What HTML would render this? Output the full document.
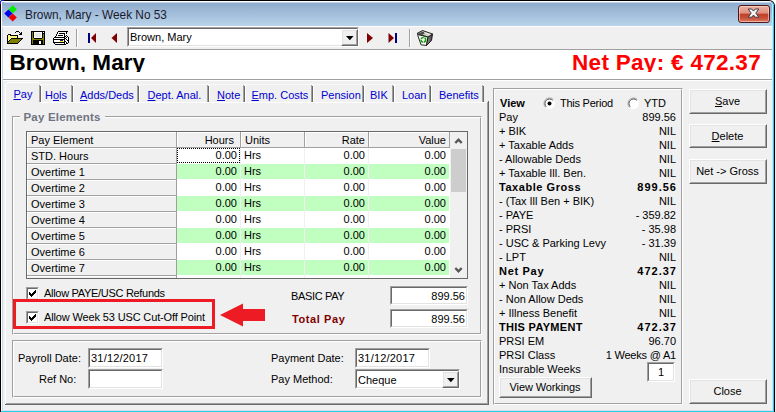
<!DOCTYPE html>
<html><head><meta charset="utf-8">
<style>
*{margin:0;padding:0;box-sizing:border-box}
html,body{width:776px;height:412px;overflow:hidden;background:#fff}
body{position:relative;font-family:"Liberation Sans",sans-serif;font-size:11px;color:#000}
.a{position:absolute}
.t{position:absolute;white-space:nowrap;font-size:11px;line-height:13px}
.b{font-weight:bold}
.r{text-align:right}
.c{text-align:center}
.blue{color:#0000d0}
.u{text-decoration:underline}
/* sunken edit */
.ed{position:absolute;background:#fff;border-top:1px solid #a0a0a0;border-left:1px solid #a0a0a0;border-right:1px solid #fff;border-bottom:1px solid #fff}
.ed:before{content:"";position:absolute;left:0;top:0;right:0;bottom:0;border-top:1px solid #696969;border-left:1px solid #696969;border-right:1px solid #e3e3e3;border-bottom:1px solid #e3e3e3}
/* raised button */
.btn{position:absolute;background:#f0f0f0;border-top:1px solid #fff;border-left:1px solid #fff;border-right:1px solid #696969;border-bottom:1px solid #696969}
.btn:before{content:"";position:absolute;left:0;top:0;right:0;bottom:0;border-top:1px solid #e3e3e3;border-left:1px solid #e3e3e3;border-right:1px solid #a0a0a0;border-bottom:1px solid #a0a0a0}
/* group box */
.grp{position:absolute;border-top:1px solid #a0a0a0;border-left:1px solid #a0a0a0;border-right:1px solid #fff;border-bottom:1px solid #fff}
.grp:before{content:"";position:absolute;left:0;top:0;right:0;bottom:0;border-top:1px solid #fff;border-left:1px solid #fff;border-right:1px solid #a0a0a0;border-bottom:1px solid #a0a0a0}
</style></head>
<body>
<!-- window frame -->
<div class="a" style="left:775px;top:4px;width:1px;height:408px;background:#e0e8fc"></div>
<div class="a" style="left:0;top:0;width:775px;height:412px;background:#000;border-radius:2px 6px 0 0"></div>
<div class="a" style="left:1px;top:1px;width:773px;height:411px;background:#fff;border-radius:1px 5px 0 0"></div>
<div class="a" style="left:1px;top:2px;width:773px;height:410px;background:#22d0ea;border-radius:1px 4px 0 0"></div>
<div class="a" style="left:1px;top:2px;width:1px;height:409px;background:#fff"></div>
<div class="a" style="left:2px;top:2px;width:771px;height:409px;background:#dcdcf0;border-radius:1px 4px 0 0"></div>
<div class="a" style="left:2px;top:2px;width:1px;height:408px;background:#c4d8ee"></div>
<div class="a" style="left:0;top:0;width:1px;height:1px;background:#7fe8ff"></div>
<div class="a" style="left:2px;top:0;width:2px;height:1px;background:#3010e0"></div>
<div class="a" style="left:0;top:1px;width:1px;height:3px;background:#3010e8"></div>
<!-- title bar gradient -->
<div class="a" style="left:2px;top:2px;width:770px;height:24px;background:linear-gradient(#8eaacb,#b9d3ea);border-radius:1px 4px 0 0"></div>
<div class="a" style="left:2px;top:26px;width:770px;height:1px;background:#fff"></div>
<div class="a" style="left:4px;top:2px;width:766px;height:1px;background:#c0d4ea"></div>
<!-- client area -->
<div class="a" style="left:3px;top:27px;width:769px;height:383px;background:#f0f0f0"></div>

<!-- app icon -->
<svg class="a" style="left:0;top:0" width="24" height="24" viewBox="0 0 24 24">
<polygon points="12.7,5.2 16.8,9.3 12.7,13.4 8.6,9.3" fill="#00f000"/>
<polygon points="8.4,9.4 12.5,13.5 8.4,17.6 4.3,13.5" fill="#0000f0"/>
<polygon points="12.7,13.4 16.8,17.5 12.7,21.6 8.6,17.5" fill="#f00000"/>
</svg>
<div class="t" style="left:25px;top:7px;font-size:11.85px;line-height:16px;color:#1a1a2e">Brown, Mary - Week No 53</div>
<!-- close button -->
<div class="a" style="left:738px;top:5px;width:32px;height:18px;border:1px solid #4a1818;border-radius:3px;background:linear-gradient(#eab0a0 0%,#e09080 45%,#c04028 50%,#c85038 75%,#dc7a64 100%);box-shadow:inset 0 0 0 1px rgba(255,220,210,.6)"></div>
<svg class="a" style="left:745px;top:7px" width="17" height="13" viewBox="0 0 17 13">
<polygon points="3.20,2.00 6.60,2.00 8.50,4.10 10.40,2.00 13.80,2.00 10.80,6.10 13.80,10.20 10.40,10.20 8.50,8.10 6.60,10.20 3.20,10.20 6.20,6.10" fill="#f8f8f8" stroke="#3a3a4c" stroke-width="1" stroke-linejoin="round"/>
</svg>

<!-- toolbar -->
<div class="a" style="left:3px;top:49px;width:769px;height:1px;background:#a0a0a0"></div>
<!-- open folder icon -->
<svg class="a" style="left:0;top:0" width="80" height="50" viewBox="0 0 80 50" shape-rendering="crispEdges"><rect x="16" y="31" width="3" height="1" fill="#000"/><rect x="15" y="32" width="1" height="1" fill="#000"/><rect x="19" y="32" width="1" height="1" fill="#000"/><rect x="21" y="32" width="1" height="1" fill="#000"/><rect x="20" y="33" width="2" height="1" fill="#000"/><rect x="8" y="34" width="3" height="1" fill="#000"/><rect x="19" y="34" width="3" height="1" fill="#000"/><rect x="7" y="35" width="1" height="1" fill="#000"/><rect x="8" y="35" width="1" height="1" fill="#ffff00"/><rect x="9" y="35" width="1" height="1" fill="#fff"/><rect x="10" y="35" width="8" height="1" fill="#000"/><rect x="7" y="36" width="1" height="1" fill="#000"/><rect x="8" y="36" width="1" height="1" fill="#fff"/><rect x="9" y="36" width="1" height="1" fill="#ffff00"/><rect x="10" y="36" width="1" height="1" fill="#fff"/><rect x="11" y="36" width="1" height="1" fill="#ffff00"/><rect x="12" y="36" width="1" height="1" fill="#fff"/><rect x="13" y="36" width="1" height="1" fill="#ffff00"/><rect x="14" y="36" width="1" height="1" fill="#fff"/><rect x="15" y="36" width="1" height="1" fill="#ffff00"/><rect x="16" y="36" width="1" height="1" fill="#fff"/><rect x="17" y="36" width="1" height="1" fill="#000"/><rect x="7" y="37" width="1" height="1" fill="#000"/><rect x="8" y="37" width="1" height="1" fill="#ffff00"/><rect x="9" y="37" width="1" height="1" fill="#fff"/><rect x="10" y="37" width="1" height="1" fill="#ffff00"/><rect x="11" y="37" width="1" height="1" fill="#fff"/><rect x="12" y="37" width="1" height="1" fill="#ffff00"/><rect x="13" y="37" width="1" height="1" fill="#fff"/><rect x="14" y="37" width="1" height="1" fill="#ffff00"/><rect x="15" y="37" width="1" height="1" fill="#fff"/><rect x="16" y="37" width="1" height="1" fill="#ffff00"/><rect x="17" y="37" width="1" height="1" fill="#000"/><rect x="7" y="38" width="1" height="1" fill="#000"/><rect x="8" y="38" width="1" height="1" fill="#fff"/><rect x="9" y="38" width="1" height="1" fill="#ffff00"/><rect x="10" y="38" width="1" height="1" fill="#fff"/><rect x="11" y="38" width="12" height="1" fill="#000"/><rect x="7" y="39" width="1" height="1" fill="#000"/><rect x="8" y="39" width="1" height="1" fill="#ffff00"/><rect x="9" y="39" width="1" height="1" fill="#fff"/><rect x="10" y="39" width="1" height="1" fill="#000"/><rect x="11" y="39" width="10" height="1" fill="#808000"/><rect x="21" y="39" width="1" height="1" fill="#000"/><rect x="7" y="40" width="1" height="1" fill="#000"/><rect x="8" y="40" width="1" height="1" fill="#fff"/><rect x="9" y="40" width="1" height="1" fill="#000"/><rect x="10" y="40" width="10" height="1" fill="#808000"/><rect x="20" y="40" width="1" height="1" fill="#000"/><rect x="7" y="41" width="2" height="1" fill="#000"/><rect x="9" y="41" width="10" height="1" fill="#808000"/><rect x="19" y="41" width="1" height="1" fill="#000"/><rect x="7" y="42" width="1" height="1" fill="#000"/><rect x="8" y="42" width="10" height="1" fill="#808000"/><rect x="18" y="42" width="1" height="1" fill="#000"/><rect x="7" y="43" width="11" height="1" fill="#000"/><rect x="31" y="31" width="14" height="1" fill="#000"/><rect x="31" y="32" width="1" height="1" fill="#000"/><rect x="32" y="32" width="1" height="1" fill="#808000"/><rect x="33" y="32" width="1" height="1" fill="#000"/><rect x="34" y="32" width="8" height="1" fill="#fff"/><rect x="42" y="32" width="1" height="1" fill="#000"/><rect x="43" y="32" width="1" height="1" fill="#fff"/><rect x="44" y="32" width="1" height="1" fill="#000"/><rect x="31" y="33" width="1" height="1" fill="#000"/><rect x="32" y="33" width="1" height="1" fill="#808000"/><rect x="33" y="33" width="1" height="1" fill="#000"/><rect x="34" y="33" width="1" height="1" fill="#fff"/><rect x="35" y="33" width="6" height="1" fill="#e6e6e6"/><rect x="41" y="33" width="1" height="1" fill="#fff"/><rect x="42" y="33" width="3" height="1" fill="#000"/><rect x="31" y="34" width="1" height="1" fill="#000"/><rect x="32" y="34" width="1" height="1" fill="#808000"/><rect x="33" y="34" width="1" height="1" fill="#000"/><rect x="34" y="34" width="1" height="1" fill="#fff"/><rect x="35" y="34" width="6" height="1" fill="#e6e6e6"/><rect x="41" y="34" width="1" height="1" fill="#fff"/><rect x="42" y="34" width="1" height="1" fill="#000"/><rect x="43" y="34" width="1" height="1" fill="#808000"/><rect x="44" y="34" width="1" height="1" fill="#000"/><rect x="31" y="35" width="1" height="1" fill="#000"/><rect x="32" y="35" width="1" height="1" fill="#808000"/><rect x="33" y="35" width="1" height="1" fill="#000"/><rect x="34" y="35" width="1" height="1" fill="#fff"/><rect x="35" y="35" width="6" height="1" fill="#e6e6e6"/><rect x="41" y="35" width="1" height="1" fill="#fff"/><rect x="42" y="35" width="1" height="1" fill="#000"/><rect x="43" y="35" width="1" height="1" fill="#808000"/><rect x="44" y="35" width="1" height="1" fill="#000"/><rect x="31" y="36" width="1" height="1" fill="#000"/><rect x="32" y="36" width="1" height="1" fill="#808000"/><rect x="33" y="36" width="1" height="1" fill="#000"/><rect x="34" y="36" width="1" height="1" fill="#fff"/><rect x="35" y="36" width="6" height="1" fill="#e6e6e6"/><rect x="41" y="36" width="1" height="1" fill="#fff"/><rect x="42" y="36" width="1" height="1" fill="#000"/><rect x="43" y="36" width="1" height="1" fill="#808000"/><rect x="44" y="36" width="1" height="1" fill="#000"/><rect x="31" y="37" width="1" height="1" fill="#000"/><rect x="32" y="37" width="1" height="1" fill="#808000"/><rect x="33" y="37" width="1" height="1" fill="#000"/><rect x="34" y="37" width="8" height="1" fill="#fff"/><rect x="42" y="37" width="1" height="1" fill="#000"/><rect x="43" y="37" width="1" height="1" fill="#808000"/><rect x="44" y="37" width="1" height="1" fill="#000"/><rect x="31" y="38" width="1" height="1" fill="#000"/><rect x="32" y="38" width="2" height="1" fill="#808000"/><rect x="34" y="38" width="8" height="1" fill="#000"/><rect x="42" y="38" width="2" height="1" fill="#808000"/><rect x="44" y="38" width="1" height="1" fill="#000"/><rect x="31" y="39" width="1" height="1" fill="#000"/><rect x="32" y="39" width="12" height="1" fill="#808000"/><rect x="44" y="39" width="1" height="1" fill="#000"/><rect x="31" y="40" width="1" height="1" fill="#000"/><rect x="32" y="40" width="1" height="1" fill="#808000"/><rect x="33" y="40" width="10" height="1" fill="#000"/><rect x="43" y="40" width="1" height="1" fill="#808000"/><rect x="44" y="40" width="1" height="1" fill="#000"/><rect x="31" y="41" width="1" height="1" fill="#000"/><rect x="32" y="41" width="1" height="1" fill="#808000"/><rect x="33" y="41" width="6" height="1" fill="#000"/><rect x="39" y="41" width="2" height="1" fill="#fff"/><rect x="41" y="41" width="2" height="1" fill="#000"/><rect x="43" y="41" width="1" height="1" fill="#808000"/><rect x="44" y="41" width="1" height="1" fill="#000"/><rect x="31" y="42" width="1" height="1" fill="#000"/><rect x="32" y="42" width="1" height="1" fill="#808000"/><rect x="33" y="42" width="6" height="1" fill="#000"/><rect x="39" y="42" width="2" height="1" fill="#fff"/><rect x="41" y="42" width="2" height="1" fill="#000"/><rect x="43" y="42" width="1" height="1" fill="#808000"/><rect x="44" y="42" width="1" height="1" fill="#000"/><rect x="31" y="43" width="1" height="1" fill="#000"/><rect x="32" y="43" width="1" height="1" fill="#808000"/><rect x="33" y="43" width="6" height="1" fill="#000"/><rect x="39" y="43" width="2" height="1" fill="#fff"/><rect x="41" y="43" width="2" height="1" fill="#000"/><rect x="43" y="43" width="1" height="1" fill="#808000"/><rect x="44" y="43" width="1" height="1" fill="#000"/><rect x="31" y="44" width="14" height="1" fill="#000"/><rect x="58" y="31" width="10" height="1" fill="#000"/><rect x="57" y="32" width="1" height="1" fill="#000"/><rect x="58" y="32" width="8" height="1" fill="#fff"/><rect x="66" y="32" width="1" height="1" fill="#000"/><rect x="57" y="33" width="1" height="1" fill="#000"/><rect x="58" y="33" width="1" height="1" fill="#fff"/><rect x="59" y="33" width="6" height="1" fill="#000"/><rect x="65" y="33" width="1" height="1" fill="#fff"/><rect x="66" y="33" width="1" height="1" fill="#000"/><rect x="56" y="34" width="1" height="1" fill="#000"/><rect x="57" y="34" width="7" height="1" fill="#fff"/><rect x="64" y="34" width="1" height="1" fill="#000"/><rect x="65" y="34" width="2" height="1" fill="#fff"/><rect x="56" y="35" width="1" height="1" fill="#000"/><rect x="57" y="35" width="1" height="1" fill="#fff"/><rect x="58" y="35" width="5" height="1" fill="#000"/><rect x="63" y="35" width="1" height="1" fill="#fff"/><rect x="64" y="35" width="1" height="1" fill="#000"/><rect x="65" y="35" width="1" height="1" fill="#fff"/><rect x="66" y="35" width="1" height="1" fill="#000"/><rect x="67" y="35" width="1" height="1" fill="#fff"/><rect x="55" y="36" width="1" height="1" fill="#000"/><rect x="56" y="36" width="8" height="1" fill="#fff"/><rect x="64" y="36" width="2" height="1" fill="#000"/><rect x="66" y="36" width="1" height="1" fill="#fff"/><rect x="67" y="36" width="1" height="1" fill="#000"/><rect x="54" y="37" width="11" height="1" fill="#000"/><rect x="65" y="37" width="1" height="1" fill="#fff"/><rect x="66" y="37" width="1" height="1" fill="#000"/><rect x="67" y="37" width="1" height="1" fill="#fff"/><rect x="68" y="37" width="1" height="1" fill="#000"/><rect x="53" y="38" width="1" height="1" fill="#000"/><rect x="54" y="38" width="10" height="1" fill="#fff"/><rect x="64" y="38" width="2" height="1" fill="#000"/><rect x="66" y="38" width="2" height="1" fill="#fff"/><rect x="68" y="38" width="1" height="1" fill="#000"/><rect x="53" y="39" width="12" height="1" fill="#000"/><rect x="65" y="39" width="1" height="1" fill="#fff"/><rect x="66" y="39" width="1" height="1" fill="#000"/><rect x="67" y="39" width="1" height="1" fill="#fff"/><rect x="68" y="39" width="1" height="1" fill="#000"/><rect x="53" y="40" width="1" height="1" fill="#000"/><rect x="54" y="40" width="6" height="1" fill="#fff"/><rect x="60" y="40" width="3" height="1" fill="#202050"/><rect x="63" y="40" width="1" height="1" fill="#fff"/><rect x="64" y="40" width="1" height="1" fill="#000"/><rect x="65" y="40" width="2" height="1" fill="#fff"/><rect x="67" y="40" width="2" height="1" fill="#000"/><rect x="53" y="41" width="1" height="1" fill="#000"/><rect x="54" y="41" width="6" height="1" fill="#fff"/><rect x="60" y="41" width="3" height="1" fill="#ffff00"/><rect x="63" y="41" width="1" height="1" fill="#fff"/><rect x="64" y="41" width="2" height="1" fill="#000"/><rect x="66" y="41" width="2" height="1" fill="#fff"/><rect x="68" y="41" width="1" height="1" fill="#000"/><rect x="53" y="42" width="12" height="1" fill="#000"/><rect x="65" y="42" width="1" height="1" fill="#fff"/><rect x="66" y="42" width="1" height="1" fill="#000"/><rect x="67" y="42" width="1" height="1" fill="#fff"/><rect x="68" y="42" width="1" height="1" fill="#000"/><rect x="54" y="43" width="1" height="1" fill="#000"/><rect x="55" y="43" width="9" height="1" fill="#fff"/><rect x="64" y="43" width="1" height="1" fill="#000"/><rect x="65" y="43" width="1" height="1" fill="#fff"/><rect x="66" y="43" width="2" height="1" fill="#000"/><rect x="55" y="44" width="11" height="1" fill="#000"/></svg>
<div class="a" style="left:76px;top:29px;width:1px;height:18px;background:#a0a0a0"></div>
<div class="a" style="left:77px;top:29px;width:1px;height:18px;background:#fff"></div>
<!-- first / prev -->
<svg class="a" style="left:80px;top:30px" width="45" height="16" viewBox="0 0 45 16" shape-rendering="crispEdges">
<rect x="8" y="3" width="2" height="10" fill="#000080"/>
<polygon points="11,8 16,3 16,13" fill="#800000" shape-rendering="auto"/>
<polygon points="31.5,8 37,3 37,13" fill="#800000" shape-rendering="auto"/>
</svg>
<!-- employee combo -->
<div class="ed" style="left:127px;top:27px;width:232px;height:20px"></div>
<div class="t" style="left:130px;top:31px">Brown, Mary</div>
<div class="btn" style="left:341px;top:29px;width:17px;height:17px"></div>
<svg class="a" style="left:346px;top:36px" width="8" height="5" viewBox="0 0 8 5"><polygon points="0,0 7.6,0 3.8,4.2" fill="#000"/></svg>
<!-- next / last -->
<svg class="a" style="left:360px;top:30px" width="45" height="16" viewBox="0 0 45 16">
<polygon points="7,3 7,13 13,8" fill="#800000"/>
<polygon points="28.5,3 28.5,13 34,8" fill="#800000"/>
<rect x="35" y="3" width="2" height="10" fill="#000080"/>
</svg>
<div class="a" style="left:409px;top:29px;width:1px;height:18px;background:#a0a0a0"></div>
<div class="a" style="left:410px;top:29px;width:1px;height:18px;background:#fff"></div>
<!-- recycle bin -->
<svg class="a" style="left:414px;top:28px" width="22" height="20" viewBox="0 0 22 20">
<defs><linearGradient id="rf" x1="0" x2="1"><stop offset="0" stop-color="#9a9a9a"/><stop offset="1" stop-color="#3a3a3a"/></linearGradient></defs>
<polygon points="3.5,6.5 14,9 12.5,17.5 7,16.8" fill="#f6f6ee" stroke="#2a2a2a" stroke-width="1"/>
<polygon points="14,9 18.5,6 17.5,12.5 12.5,17.5" fill="url(#rf)" stroke="#1a1a1a" stroke-width="1"/>
<polygon points="3,5.5 8.5,2.5 18.5,6 14,9" fill="#d0d0c8" stroke="#222" stroke-width="1"/>
<polygon points="4.5,5.5 8.5,3.5 12,4.8 8,7" fill="#505050"/>
<path d="M10,4.5 L16,6.5" stroke="#f0f0e0" stroke-width="1"/>
<circle cx="9.3" cy="11.8" r="2.4" fill="none" stroke="#10a010" stroke-width="1.5" stroke-dasharray="3 0.8"/>
</svg>
<!-- header panel -->
<div class="a" style="left:3px;top:50px;width:769px;height:29px;background:#fff"></div>
<div class="a" style="left:3px;top:79px;width:769px;height:1px;background:#a0a0a0"></div>
<div class="a" style="left:3px;top:80px;width:769px;height:1px;background:#fff"></div>
<div class="a" style="left:3px;top:50px;width:769px;height:22px;overflow:hidden">
 <div class="t b" style="left:6.5px;top:0px;font-size:22.5px;line-height:26px;letter-spacing:0.05px">Brown, Mary</div>
 <div class="t b" style="right:11px;top:0px;font-size:22.5px;line-height:26px;color:#ff0000;letter-spacing:0.3px">Net Pay: &#8364; 472.37</div>
</div>

<!-- tabs -->
<div class="a" style="left:40px;top:84px;width:444px;height:1px;background:#f8f8f8"></div>
<div class="a" style="left:39px;top:85px;width:1px;height:17px;background:#a0a0a0"></div><div class="a" style="left:40px;top:86px;width:1px;height:16px;background:#696969"></div><div class="a" style="left:41px;top:85px;width:1px;height:17px;background:#fff"></div>
<div class="a" style="left:71px;top:85px;width:1px;height:17px;background:#a0a0a0"></div><div class="a" style="left:72px;top:86px;width:1px;height:16px;background:#696969"></div><div class="a" style="left:73px;top:85px;width:1px;height:17px;background:#fff"></div>
<div class="a" style="left:137px;top:85px;width:1px;height:17px;background:#a0a0a0"></div><div class="a" style="left:138px;top:86px;width:1px;height:16px;background:#696969"></div><div class="a" style="left:139px;top:85px;width:1px;height:17px;background:#fff"></div>
<div class="a" style="left:207px;top:85px;width:1px;height:17px;background:#a0a0a0"></div><div class="a" style="left:208px;top:86px;width:1px;height:16px;background:#696969"></div><div class="a" style="left:209px;top:85px;width:1px;height:17px;background:#fff"></div>
<div class="a" style="left:243px;top:85px;width:1px;height:17px;background:#a0a0a0"></div><div class="a" style="left:244px;top:86px;width:1px;height:16px;background:#696969"></div><div class="a" style="left:245px;top:85px;width:1px;height:17px;background:#fff"></div>
<div class="a" style="left:311px;top:85px;width:1px;height:17px;background:#a0a0a0"></div><div class="a" style="left:312px;top:86px;width:1px;height:16px;background:#696969"></div><div class="a" style="left:313px;top:85px;width:1px;height:17px;background:#fff"></div>
<div class="a" style="left:362px;top:85px;width:1px;height:17px;background:#a0a0a0"></div><div class="a" style="left:363px;top:86px;width:1px;height:16px;background:#696969"></div><div class="a" style="left:364px;top:85px;width:1px;height:17px;background:#fff"></div>
<div class="a" style="left:392px;top:85px;width:1px;height:17px;background:#a0a0a0"></div><div class="a" style="left:393px;top:86px;width:1px;height:16px;background:#696969"></div><div class="a" style="left:394px;top:85px;width:1px;height:17px;background:#fff"></div>
<div class="a" style="left:429px;top:85px;width:1px;height:17px;background:#a0a0a0"></div><div class="a" style="left:430px;top:86px;width:1px;height:16px;background:#696969"></div><div class="a" style="left:431px;top:85px;width:1px;height:17px;background:#fff"></div>
<div class="a" style="left:482px;top:85px;width:1px;height:17px;background:#a0a0a0"></div><div class="a" style="left:483px;top:86px;width:1px;height:16px;background:#696969"></div>
<div class="a" style="left:7px;top:82px;width:32px;height:1px;background:#fff"></div>
<div class="a" style="left:6px;top:83px;width:1px;height:1px;background:#fff"></div>
<div class="a" style="left:5px;top:84px;width:1px;height:320px;background:#fff"></div>
<div class="a" style="left:40px;top:102px;width:447px;height:1px;background:#fff"></div>
<div class="a" style="left:487px;top:102px;width:1px;height:302px;background:#a0a0a0"></div>
<div class="a" style="left:488px;top:101px;width:1px;height:304px;background:#696969"></div>
<div class="a" style="left:6px;top:403px;width:482px;height:1px;background:#a0a0a0"></div>
<div class="a" style="left:5px;top:404px;width:484px;height:1px;background:#696969"></div>
<div class="t blue" style="left:13.5px;top:88px"><span class="u">P</span>ay</div>
<div class="t blue" style="left:45px;top:89px">H<span class="u">o</span>ls</div>
<div class="t blue" style="left:80px;top:89px"><span class="u">A</span>dds/Deds</div>
<div class="t blue" style="left:147.5px;top:89px"><span class="u">D</span>ept. Anal.</div>
<div class="t blue" style="left:217px;top:89px"><span class="u">N</span>ote</div>
<div class="t blue" style="left:251.5px;top:89px"><span class="u">E</span>mp. Costs</div>
<div class="t blue" style="left:321px;top:89px">Pension</div>
<div class="t blue" style="left:370px;top:89px">BIK</div>
<div class="t blue" style="left:402px;top:89px">Loan</div>
<div class="t blue" style="left:439px;top:89px">Benefits</div>

<!-- Pay Elements group -->
<div class="grp" style="left:12px;top:116px;width:470px;height:219px"></div>
<div class="a" style="left:20px;top:110px;width:85px;height:14px;background:#f0f0f0"></div>
<div class="t b" style="left:23.5px;top:111px;color:#6e7480;font-size:11.5px;letter-spacing:0.2px">Pay Elements</div>
<div class="a" style="left:26px;top:131px;width:442px;height:148px;background:#fff;border:1px solid #696969;overflow:hidden">
<div class="a" style="left:0px;top:0px;width:150px;height:16px;background:#a0a0a0"></div><div class="a" style="left:0px;top:0px;width:149px;height:15px;background:#fff"></div><div class="a" style="left:1px;top:1px;width:148px;height:14px;background:#f0f0f0"></div><div class="t" style="left:4px;top:2px">Pay Element</div><div class="a" style="left:150px;top:0px;width:64px;height:16px;background:#a0a0a0"></div><div class="a" style="left:150px;top:0px;width:63px;height:15px;background:#fff"></div><div class="a" style="left:151px;top:1px;width:62px;height:14px;background:#f0f0f0"></div><div class="t r" style="left:150px;width:57px;top:2px">Hours</div><div class="a" style="left:214px;top:0px;width:64px;height:16px;background:#a0a0a0"></div><div class="a" style="left:214px;top:0px;width:63px;height:15px;background:#fff"></div><div class="a" style="left:215px;top:1px;width:62px;height:14px;background:#f0f0f0"></div><div class="t" style="left:218px;top:2px">Units</div><div class="a" style="left:278px;top:0px;width:64px;height:16px;background:#a0a0a0"></div><div class="a" style="left:278px;top:0px;width:63px;height:15px;background:#fff"></div><div class="a" style="left:279px;top:1px;width:62px;height:14px;background:#f0f0f0"></div><div class="t r" style="left:278px;width:60px;top:2px">Rate</div><div class="a" style="left:342px;top:0px;width:81px;height:16px;background:#a0a0a0"></div><div class="a" style="left:342px;top:0px;width:80px;height:15px;background:#fff"></div><div class="a" style="left:343px;top:1px;width:79px;height:14px;background:#f0f0f0"></div><div class="t r" style="left:342px;width:77px;top:2px">Value</div><div class="a" style="left:0px;top:16px;width:150px;height:16px;background:#a0a0a0"></div><div class="a" style="left:0px;top:16px;width:149px;height:15px;background:#fff"></div><div class="a" style="left:1px;top:17px;width:148px;height:14px;background:#f0f0f0"></div><div class="t" style="left:4px;top:18px">STD. Hours</div><div class="a" style="left:150px;top:16px;width:63px;height:15px;background:#fff"></div><div class="a" style="left:213px;top:16px;width:1px;height:16px;background:#f0f0f0"></div><div class="a" style="left:214px;top:16px;width:63px;height:15px;background:#fff"></div><div class="a" style="left:277px;top:16px;width:1px;height:16px;background:#f0f0f0"></div><div class="a" style="left:278px;top:16px;width:63px;height:15px;background:#fff"></div><div class="a" style="left:341px;top:16px;width:1px;height:16px;background:#f0f0f0"></div><div class="a" style="left:342px;top:16px;width:80px;height:15px;background:#fff"></div><div class="t r" style="left:150px;width:60px;top:17px">0.00</div><div class="t" style="left:217px;top:17px">Hrs</div><div class="t r" style="left:278px;width:60px;top:17px">0.00</div><div class="t r" style="left:342px;width:77px;top:17px">0.00</div><div class="a" style="left:0px;top:32px;width:150px;height:16px;background:#a0a0a0"></div><div class="a" style="left:0px;top:32px;width:149px;height:15px;background:#fff"></div><div class="a" style="left:1px;top:33px;width:148px;height:14px;background:#f0f0f0"></div><div class="t" style="left:4px;top:34px">Overtime 1</div><div class="a" style="left:150px;top:32px;width:63px;height:15px;background:#c0ffc0"></div><div class="a" style="left:213px;top:32px;width:1px;height:16px;background:#f0f0f0"></div><div class="a" style="left:214px;top:32px;width:63px;height:15px;background:#c0ffc0"></div><div class="a" style="left:277px;top:32px;width:1px;height:16px;background:#f0f0f0"></div><div class="a" style="left:278px;top:32px;width:63px;height:15px;background:#c0ffc0"></div><div class="a" style="left:341px;top:32px;width:1px;height:16px;background:#f0f0f0"></div><div class="a" style="left:342px;top:32px;width:80px;height:15px;background:#c0ffc0"></div><div class="t r" style="left:150px;width:60px;top:33px">0.00</div><div class="t" style="left:217px;top:33px">Hrs</div><div class="t r" style="left:278px;width:60px;top:33px">0.00</div><div class="t r" style="left:342px;width:77px;top:33px">0.00</div><div class="a" style="left:0px;top:48px;width:150px;height:16px;background:#a0a0a0"></div><div class="a" style="left:0px;top:48px;width:149px;height:15px;background:#fff"></div><div class="a" style="left:1px;top:49px;width:148px;height:14px;background:#f0f0f0"></div><div class="t" style="left:4px;top:50px">Overtime 2</div><div class="a" style="left:150px;top:48px;width:63px;height:15px;background:#fff"></div><div class="a" style="left:213px;top:48px;width:1px;height:16px;background:#f0f0f0"></div><div class="a" style="left:214px;top:48px;width:63px;height:15px;background:#fff"></div><div class="a" style="left:277px;top:48px;width:1px;height:16px;background:#f0f0f0"></div><div class="a" style="left:278px;top:48px;width:63px;height:15px;background:#fff"></div><div class="a" style="left:341px;top:48px;width:1px;height:16px;background:#f0f0f0"></div><div class="a" style="left:342px;top:48px;width:80px;height:15px;background:#fff"></div><div class="t r" style="left:150px;width:60px;top:49px">0.00</div><div class="t" style="left:217px;top:49px">Hrs</div><div class="t r" style="left:278px;width:60px;top:49px">0.00</div><div class="t r" style="left:342px;width:77px;top:49px">0.00</div><div class="a" style="left:0px;top:64px;width:150px;height:16px;background:#a0a0a0"></div><div class="a" style="left:0px;top:64px;width:149px;height:15px;background:#fff"></div><div class="a" style="left:1px;top:65px;width:148px;height:14px;background:#f0f0f0"></div><div class="t" style="left:4px;top:66px">Overtime 3</div><div class="a" style="left:150px;top:64px;width:63px;height:15px;background:#c0ffc0"></div><div class="a" style="left:213px;top:64px;width:1px;height:16px;background:#f0f0f0"></div><div class="a" style="left:214px;top:64px;width:63px;height:15px;background:#c0ffc0"></div><div class="a" style="left:277px;top:64px;width:1px;height:16px;background:#f0f0f0"></div><div class="a" style="left:278px;top:64px;width:63px;height:15px;background:#c0ffc0"></div><div class="a" style="left:341px;top:64px;width:1px;height:16px;background:#f0f0f0"></div><div class="a" style="left:342px;top:64px;width:80px;height:15px;background:#c0ffc0"></div><div class="t r" style="left:150px;width:60px;top:65px">0.00</div><div class="t" style="left:217px;top:65px">Hrs</div><div class="t r" style="left:278px;width:60px;top:65px">0.00</div><div class="t r" style="left:342px;width:77px;top:65px">0.00</div><div class="a" style="left:0px;top:80px;width:150px;height:16px;background:#a0a0a0"></div><div class="a" style="left:0px;top:80px;width:149px;height:15px;background:#fff"></div><div class="a" style="left:1px;top:81px;width:148px;height:14px;background:#f0f0f0"></div><div class="t" style="left:4px;top:82px">Overtime 4</div><div class="a" style="left:150px;top:80px;width:63px;height:15px;background:#fff"></div><div class="a" style="left:213px;top:80px;width:1px;height:16px;background:#f0f0f0"></div><div class="a" style="left:214px;top:80px;width:63px;height:15px;background:#fff"></div><div class="a" style="left:277px;top:80px;width:1px;height:16px;background:#f0f0f0"></div><div class="a" style="left:278px;top:80px;width:63px;height:15px;background:#fff"></div><div class="a" style="left:341px;top:80px;width:1px;height:16px;background:#f0f0f0"></div><div class="a" style="left:342px;top:80px;width:80px;height:15px;background:#fff"></div><div class="t r" style="left:150px;width:60px;top:81px">0.00</div><div class="t" style="left:217px;top:81px">Hrs</div><div class="t r" style="left:278px;width:60px;top:81px">0.00</div><div class="t r" style="left:342px;width:77px;top:81px">0.00</div><div class="a" style="left:0px;top:96px;width:150px;height:16px;background:#a0a0a0"></div><div class="a" style="left:0px;top:96px;width:149px;height:15px;background:#fff"></div><div class="a" style="left:1px;top:97px;width:148px;height:14px;background:#f0f0f0"></div><div class="t" style="left:4px;top:98px">Overtime 5</div><div class="a" style="left:150px;top:96px;width:63px;height:15px;background:#c0ffc0"></div><div class="a" style="left:213px;top:96px;width:1px;height:16px;background:#f0f0f0"></div><div class="a" style="left:214px;top:96px;width:63px;height:15px;background:#c0ffc0"></div><div class="a" style="left:277px;top:96px;width:1px;height:16px;background:#f0f0f0"></div><div class="a" style="left:278px;top:96px;width:63px;height:15px;background:#c0ffc0"></div><div class="a" style="left:341px;top:96px;width:1px;height:16px;background:#f0f0f0"></div><div class="a" style="left:342px;top:96px;width:80px;height:15px;background:#c0ffc0"></div><div class="t r" style="left:150px;width:60px;top:97px">0.00</div><div class="t" style="left:217px;top:97px">Hrs</div><div class="t r" style="left:278px;width:60px;top:97px">0.00</div><div class="t r" style="left:342px;width:77px;top:97px">0.00</div><div class="a" style="left:0px;top:112px;width:150px;height:16px;background:#a0a0a0"></div><div class="a" style="left:0px;top:112px;width:149px;height:15px;background:#fff"></div><div class="a" style="left:1px;top:113px;width:148px;height:14px;background:#f0f0f0"></div><div class="t" style="left:4px;top:114px">Overtime 6</div><div class="a" style="left:150px;top:112px;width:63px;height:15px;background:#fff"></div><div class="a" style="left:213px;top:112px;width:1px;height:16px;background:#f0f0f0"></div><div class="a" style="left:214px;top:112px;width:63px;height:15px;background:#fff"></div><div class="a" style="left:277px;top:112px;width:1px;height:16px;background:#f0f0f0"></div><div class="a" style="left:278px;top:112px;width:63px;height:15px;background:#fff"></div><div class="a" style="left:341px;top:112px;width:1px;height:16px;background:#f0f0f0"></div><div class="a" style="left:342px;top:112px;width:80px;height:15px;background:#fff"></div><div class="t r" style="left:150px;width:60px;top:113px">0.00</div><div class="t" style="left:217px;top:113px">Hrs</div><div class="t r" style="left:278px;width:60px;top:113px">0.00</div><div class="t r" style="left:342px;width:77px;top:113px">0.00</div><div class="a" style="left:0px;top:128px;width:150px;height:16px;background:#a0a0a0"></div><div class="a" style="left:0px;top:128px;width:149px;height:15px;background:#fff"></div><div class="a" style="left:1px;top:129px;width:148px;height:14px;background:#f0f0f0"></div><div class="t" style="left:4px;top:130px">Overtime 7</div><div class="a" style="left:150px;top:128px;width:63px;height:15px;background:#c0ffc0"></div><div class="a" style="left:213px;top:128px;width:1px;height:16px;background:#f0f0f0"></div><div class="a" style="left:214px;top:128px;width:63px;height:15px;background:#c0ffc0"></div><div class="a" style="left:277px;top:128px;width:1px;height:16px;background:#f0f0f0"></div><div class="a" style="left:278px;top:128px;width:63px;height:15px;background:#c0ffc0"></div><div class="a" style="left:341px;top:128px;width:1px;height:16px;background:#f0f0f0"></div><div class="a" style="left:342px;top:128px;width:80px;height:15px;background:#c0ffc0"></div><div class="t r" style="left:150px;width:60px;top:129px">0.00</div><div class="t" style="left:217px;top:129px">Hrs</div><div class="t r" style="left:278px;width:60px;top:129px">0.00</div><div class="t r" style="left:342px;width:77px;top:129px">0.00</div><div class="a" style="left:0px;top:144px;width:150px;height:16px;background:#a0a0a0"></div><div class="a" style="left:0px;top:144px;width:149px;height:15px;background:#fff"></div><div class="a" style="left:1px;top:145px;width:148px;height:14px;background:#f0f0f0"></div><div class="t" style="left:4px;top:146px">Overtime 8</div><div class="a" style="left:150px;top:144px;width:63px;height:15px;background:#fff"></div><div class="a" style="left:213px;top:144px;width:1px;height:16px;background:#f0f0f0"></div><div class="a" style="left:214px;top:144px;width:63px;height:15px;background:#fff"></div><div class="a" style="left:277px;top:144px;width:1px;height:16px;background:#f0f0f0"></div><div class="a" style="left:278px;top:144px;width:63px;height:15px;background:#fff"></div><div class="a" style="left:341px;top:144px;width:1px;height:16px;background:#f0f0f0"></div><div class="a" style="left:342px;top:144px;width:80px;height:15px;background:#fff"></div><div class="t r" style="left:150px;width:60px;top:145px">0.00</div><div class="t" style="left:217px;top:145px">Hrs</div><div class="t r" style="left:278px;width:60px;top:145px">0.00</div><div class="t r" style="left:342px;width:77px;top:145px">0.00</div><div class="a" style="left:150px;top:16px;width:63px;height:15px;border:1px dotted #000"></div><div class="a" style="left:422px;top:16px;width:1px;height:130px;background:#fff"></div><div class="a" style="left:423px;top:0px;width:17px;height:146px;background:#f0f0f0"></div><div class="a" style="left:424px;top:17px;width:15px;height:43px;background:#cdcdcd"></div><svg class="a" style="left:426px;top:4px" width="11" height="9" viewBox="0 0 11 9"><path d="M2.3,7 L5.5,3.6 L8.7,7" stroke="#555" stroke-width="2.3" fill="none"/></svg><svg class="a" style="left:426px;top:134px" width="11" height="9" viewBox="0 0 11 9"><path d="M2.3,2 L5.5,5.4 L8.7,2" stroke="#555" stroke-width="2.3" fill="none"/></svg>
</div>

<!-- checkboxes -->
<div class="a" style="left:26px;top:287px;width:13px;height:13px;background:#fff;border-top:1px solid #a0a0a0;border-left:1px solid #a0a0a0;border-right:1px solid #fff;border-bottom:1px solid #fff"></div><div class="a" style="left:27px;top:288px;width:11px;height:11px;border-top:1px solid #696969;border-left:1px solid #696969;border-right:1px solid #e3e3e3;border-bottom:1px solid #e3e3e3"></div><svg class="a" style="left:29px;top:290px" width="7" height="7" shape-rendering="crispEdges"><rect x="6" y="0" width="1" height="1" fill="#000"/><rect x="5" y="1" width="1" height="1" fill="#000"/><rect x="6" y="1" width="1" height="1" fill="#000"/><rect x="0" y="2" width="1" height="1" fill="#000"/><rect x="4" y="2" width="1" height="1" fill="#000"/><rect x="5" y="2" width="1" height="1" fill="#000"/><rect x="6" y="2" width="1" height="1" fill="#000"/><rect x="0" y="3" width="1" height="1" fill="#000"/><rect x="1" y="3" width="1" height="1" fill="#000"/><rect x="3" y="3" width="1" height="1" fill="#000"/><rect x="4" y="3" width="1" height="1" fill="#000"/><rect x="5" y="3" width="1" height="1" fill="#000"/><rect x="0" y="4" width="1" height="1" fill="#000"/><rect x="1" y="4" width="1" height="1" fill="#000"/><rect x="2" y="4" width="1" height="1" fill="#000"/><rect x="3" y="4" width="1" height="1" fill="#000"/><rect x="4" y="4" width="1" height="1" fill="#000"/><rect x="1" y="5" width="1" height="1" fill="#000"/><rect x="2" y="5" width="1" height="1" fill="#000"/><rect x="3" y="5" width="1" height="1" fill="#000"/><rect x="2" y="6" width="1" height="1" fill="#000"/></svg>
<div class="a" style="left:26px;top:311px;width:13px;height:13px;background:#fff;border-top:1px solid #a0a0a0;border-left:1px solid #a0a0a0;border-right:1px solid #fff;border-bottom:1px solid #fff"></div><div class="a" style="left:27px;top:312px;width:11px;height:11px;border-top:1px solid #696969;border-left:1px solid #696969;border-right:1px solid #e3e3e3;border-bottom:1px solid #e3e3e3"></div><svg class="a" style="left:29px;top:314px" width="7" height="7" shape-rendering="crispEdges"><rect x="6" y="0" width="1" height="1" fill="#000"/><rect x="5" y="1" width="1" height="1" fill="#000"/><rect x="6" y="1" width="1" height="1" fill="#000"/><rect x="0" y="2" width="1" height="1" fill="#000"/><rect x="4" y="2" width="1" height="1" fill="#000"/><rect x="5" y="2" width="1" height="1" fill="#000"/><rect x="6" y="2" width="1" height="1" fill="#000"/><rect x="0" y="3" width="1" height="1" fill="#000"/><rect x="1" y="3" width="1" height="1" fill="#000"/><rect x="3" y="3" width="1" height="1" fill="#000"/><rect x="4" y="3" width="1" height="1" fill="#000"/><rect x="5" y="3" width="1" height="1" fill="#000"/><rect x="0" y="4" width="1" height="1" fill="#000"/><rect x="1" y="4" width="1" height="1" fill="#000"/><rect x="2" y="4" width="1" height="1" fill="#000"/><rect x="3" y="4" width="1" height="1" fill="#000"/><rect x="4" y="4" width="1" height="1" fill="#000"/><rect x="1" y="5" width="1" height="1" fill="#000"/><rect x="2" y="5" width="1" height="1" fill="#000"/><rect x="3" y="5" width="1" height="1" fill="#000"/><rect x="2" y="6" width="1" height="1" fill="#000"/></svg>
<div class="t" style="left:44px;top:287px;letter-spacing:-0.3px">Allow PAYE/USC Refunds</div>
<div class="t" style="left:44px;top:311px;letter-spacing:-0.14px">Allow Week 53 USC Cut-Off Point</div>
<div class="a" style="left:13px;top:299px;width:202px;height:30px;border:3px solid #ed1c24"></div>
<svg class="a" style="left:0;top:0" width="280" height="340"><polygon points="220,315 243,303.5 243,309 265,309 265,321 243,321 243,326.5" fill="#ed1c24"/></svg>
<div class="t" style="left:291px;top:290px;letter-spacing:-0.35px">BASIC PAY</div>
<div class="t b" style="left:292px;top:313px;color:#800000;letter-spacing:0.6px">Total Pay</div>
<div class="ed" style="left:390px;top:286px;width:78px;height:19px"></div>
<div class="t r" style="left:390px;width:75px;top:290px">899.56</div>
<div class="ed" style="left:390px;top:309px;width:78px;height:19px"></div>
<div class="t r" style="left:390px;width:75px;top:313px">899.56</div>

<!-- dates group -->
<div class="grp" style="left:12px;top:340px;width:470px;height:58px"></div>
<div class="t" style="left:18px;top:352px">Payroll Date:</div>
<div class="ed" style="left:88px;top:348px;width:75px;height:20px"></div>
<div class="t" style="left:91px;top:352px;letter-spacing:0.2px">31/12/2017</div>
<div class="t" style="left:39px;top:373px">Ref No:</div>
<div class="ed" style="left:88px;top:369px;width:75px;height:20px"></div>
<div class="t" style="left:271px;top:352px">Payment Date:</div>
<div class="ed" style="left:355px;top:348px;width:75px;height:20px"></div>
<div class="t" style="left:358px;top:352px;letter-spacing:0.2px">31/12/2017</div>
<div class="t" style="left:271px;top:373px">Pay Method:</div>
<div class="ed" style="left:355px;top:369px;width:105px;height:20px"></div>
<div class="t" style="left:358px;top:374px">Cheque</div>
<div class="btn" style="left:442px;top:371px;width:17px;height:17px"></div>
<svg class="a" style="left:447px;top:378px" width="8" height="5" viewBox="0 0 8 5"><polygon points="0,0 7.6,0 3.8,4.2" fill="#000"/></svg>

<!-- right panel -->
<div class="grp" style="left:493px;top:88px;width:190px;height:317px"></div>
<div class="t b" style="left:500px;top:97px">View</div>
<svg class="a" style="left:543px;top:97px" width="13" height="13" viewBox="0 0 13 13"><circle cx="6.5" cy="6.5" r="5.5" fill="#fff"/><path d="M2.6,10.4 A5.5,5.5 0 0 1 10.4,2.6" fill="none" stroke="#a0a0a0" stroke-width="1"/><path d="M3.3,9.7 A4.5,4.5 0 0 1 9.7,3.3" fill="none" stroke="#555" stroke-width="1"/><circle cx="6.5" cy="6.5" r="2" fill="#000"/></svg>
<div class="t" style="left:560px;top:97px;letter-spacing:-0.25px">This Period</div>
<svg class="a" style="left:627px;top:97px" width="13" height="13" viewBox="0 0 13 13"><circle cx="6.5" cy="6.5" r="5.5" fill="#fff"/><path d="M2.6,10.4 A5.5,5.5 0 0 1 10.4,2.6" fill="none" stroke="#a0a0a0" stroke-width="1"/><path d="M3.3,9.7 A4.5,4.5 0 0 1 9.7,3.3" fill="none" stroke="#555" stroke-width="1"/></svg>
<div class="t" style="left:644px;top:97px">YTD</div>
<div class="t" style="left:499px;top:111px">Pay</div><div class="t r" style="left:560px;width:116px;top:111px">899.56</div>
<div class="t" style="left:499px;top:125px">+ BIK</div><div class="t r" style="left:560px;width:116px;top:125px">NIL</div>
<div class="t" style="left:499px;top:139px">+ Taxable Adds</div><div class="t r" style="left:560px;width:116px;top:139px">NIL</div>
<div class="t" style="left:499px;top:153px">- Allowable Deds</div><div class="t r" style="left:560px;width:116px;top:153px">NIL</div>
<div class="t" style="left:499px;top:167px">+ Taxable Ill. Ben.</div><div class="t r" style="left:560px;width:116px;top:167px">NIL</div>
<div class="t b" style="left:499px;top:181px;letter-spacing:0.55px">Taxable Gross</div><div class="t b r" style="left:560px;width:117px;top:181px;letter-spacing:1px">899.56</div>
<div class="t" style="left:499px;top:195px">- (Tax Ill Ben + BIK)</div><div class="t r" style="left:560px;width:116px;top:195px">NIL</div>
<div class="t" style="left:499px;top:209px">- PAYE</div><div class="t r" style="left:560px;width:116px;top:209px">- 359.82</div>
<div class="t" style="left:499px;top:223px">- PRSI</div><div class="t r" style="left:560px;width:116px;top:223px">- 35.98</div>
<div class="t" style="left:499px;top:237px">- USC &amp; Parking Levy</div><div class="t r" style="left:560px;width:116px;top:237px">- 31.39</div>
<div class="t" style="left:499px;top:251px">- LPT</div><div class="t r" style="left:560px;width:116px;top:251px">NIL</div>
<div class="t b" style="left:499px;top:265px;letter-spacing:0.7px">Net Pay</div><div class="t b r" style="left:560px;width:117px;top:265px;letter-spacing:1px">472.37</div>
<div class="t" style="left:499px;top:279px">+ Non Tax Adds</div><div class="t r" style="left:560px;width:116px;top:279px">NIL</div>
<div class="t" style="left:499px;top:293px">- Non Allow Deds</div><div class="t r" style="left:560px;width:116px;top:293px">NIL</div>
<div class="t" style="left:499px;top:307px">+ Illness Benefit</div><div class="t r" style="left:560px;width:116px;top:307px">NIL</div>
<div class="t b" style="left:499px;top:321px;letter-spacing:0.3px">THIS PAYMENT</div><div class="t b r" style="left:560px;width:117px;top:321px;letter-spacing:1px">472.37</div>
<div class="t" style="left:499px;top:335px">PRSI EM</div><div class="t r" style="left:560px;width:116px;top:335px">96.70</div>
<div class="t" style="left:499px;top:349px">PRSI Class</div><div class="t r" style="left:560px;width:116px;top:349px;letter-spacing:-0.2px">1 Weeks @ A1</div>
<div class="t" style="left:499px;top:363px">Insurable Weeks</div>
<div class="ed" style="left:647px;top:362px;width:28px;height:20px"></div>
<div class="t c" style="left:647px;width:28px;top:366px">1</div>
<div class="btn" style="left:499px;top:377px;width:93px;height:21px"></div>
<div class="t c" style="left:499px;width:92px;top:381px;letter-spacing:-0.12px">View Workings</div>
<div class="btn" style="left:689px;top:89px;width:78px;height:25px"></div><div class="t c" style="left:689px;width:77px;top:95px"><span class="u">S</span>ave</div>
<div class="btn" style="left:689px;top:124px;width:78px;height:24px"></div><div class="t c" style="left:689px;width:77px;top:130px"><span class="u">D</span>elete</div>
<div class="btn" style="left:689px;top:159px;width:78px;height:25px"></div><div class="t c" style="left:689px;width:77px;top:165px">Net -&gt; Gross</div>
<div class="btn" style="left:689px;top:379px;width:78px;height:25px"></div><div class="t c" style="left:689px;width:77px;top:385px">Close</div>
</body></html>
